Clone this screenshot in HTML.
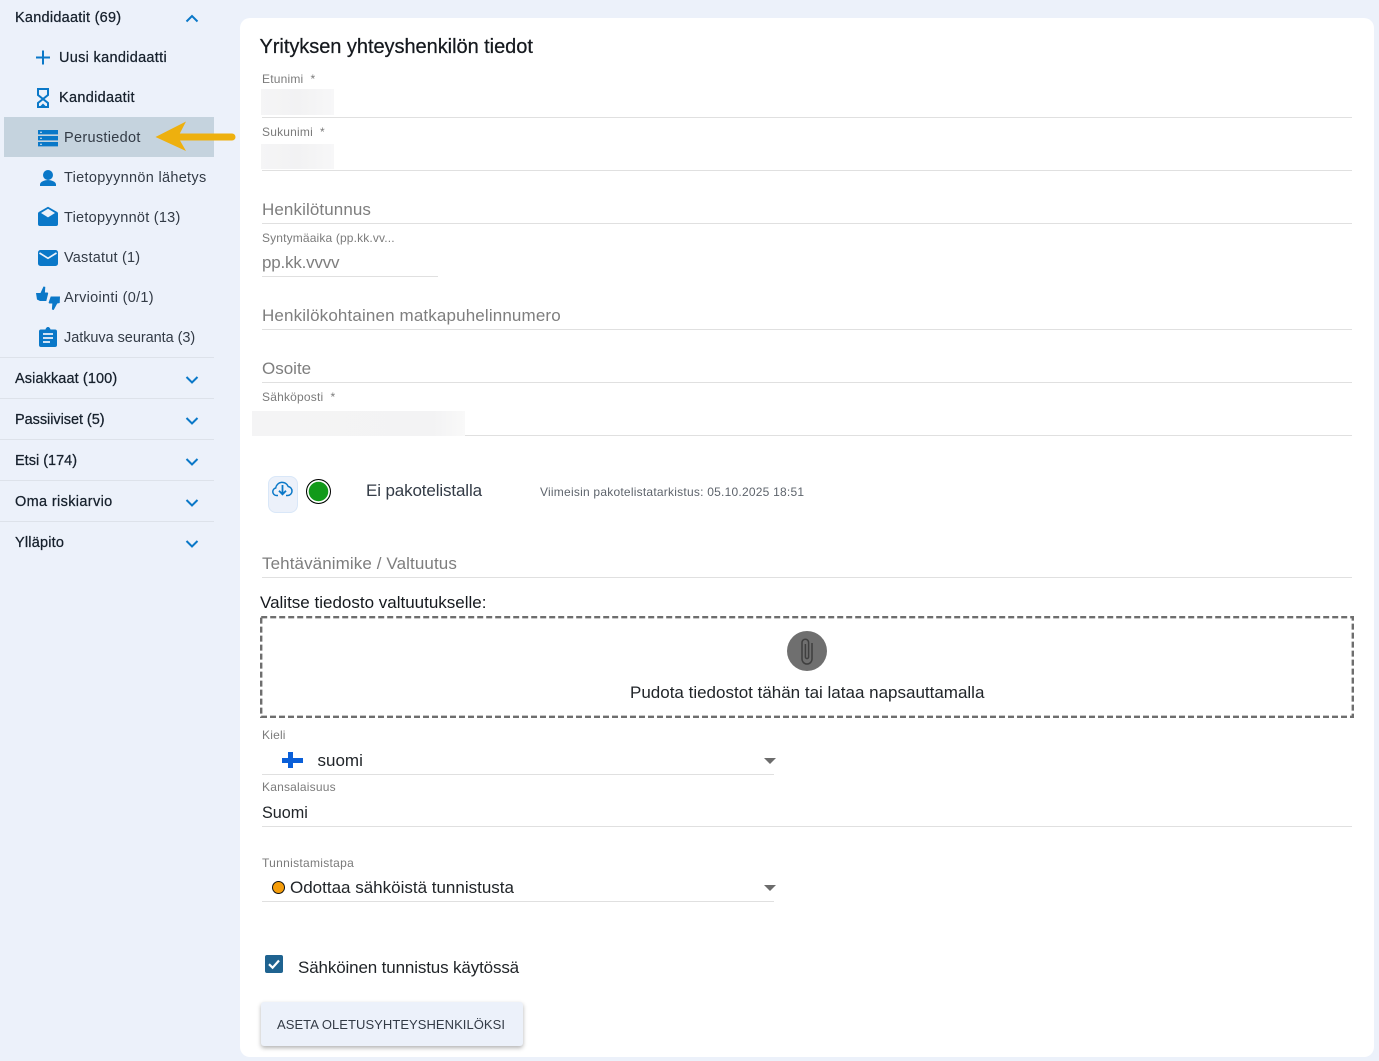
<!DOCTYPE html>
<html lang="fi"><head><meta charset="utf-8"><title>Yrityksen yhteyshenkilön tiedot</title>
<style>
html,body{margin:0;padding:0;width:1379px;height:1061px;overflow:hidden;background:#ecf1fa}
body{position:relative;font-family:"Liberation Sans",sans-serif;color:#212529}
.t{position:absolute;white-space:nowrap;line-height:20px}
.a{position:absolute}
.l{position:absolute;height:1px;background:#e0e0e0}
.sm{font-size:12px;color:#7b7b7b;letter-spacing:.2px}
.ph{font-size:17px;color:#7e7e7e}
.m{font-size:14.5px;color:#16202c;letter-spacing:.3px;-webkit-text-stroke:.25px #16202c}
.s{font-size:14.5px;color:#333b46;letter-spacing:.3px}
.g{font-size:14.5px;color:#16202c;letter-spacing:.1px;-webkit-text-stroke:.25px #16202c}
.b{font-size:17px;color:#212529}
svg{position:absolute;overflow:visible}
</style></head><body>
<div class="a" style="left:240px;top:18px;width:1134px;height:1039px;background:#fff;border-radius:10px"></div>

<div class="a" style="left:4px;top:117px;width:210px;height:40px;background:#c5d3de"></div>
<div class="l" style="left:0;top:357px;width:214px;background:#dde2ea"></div>
<div class="l" style="left:0;top:398px;width:214px;background:#dde2ea"></div>
<div class="l" style="left:0;top:439px;width:214px;background:#dde2ea"></div>
<div class="l" style="left:0;top:480px;width:214px;background:#dde2ea"></div>
<div class="l" style="left:0;top:521px;width:214px;background:#dde2ea"></div>

<div class="t g" style="left:15px;top:8px;letter-spacing:.25px">Kandidaatit (69)</div>
<div class="t m" style="left:59px;top:48px">Uusi kandidaatti</div>
<div class="t m" style="left:59px;top:88px">Kandidaatit</div>
<div class="t s" style="left:64px;top:128px">Perustiedot</div>
<div class="t s" style="left:64px;top:168px">Tietopyynnön lähetys</div>
<div class="t s" style="left:64px;top:208px;letter-spacing:.25px">Tietopyynnöt (13)</div>
<div class="t s" style="left:64px;top:248px;letter-spacing:.2px">Vastatut (1)</div>
<div class="t s" style="left:64px;top:288px">Arviointi (0/1)</div>
<div class="t s" style="left:64px;top:328px;letter-spacing:-.05px">Jatkuva seuranta (3)</div>
<div class="t g" style="left:15px;top:369px;letter-spacing:.1px">Asiakkaat (100)</div>
<div class="t g" style="left:15px;top:410px;letter-spacing:-.05px">Passiiviset (5)</div>
<div class="t g" style="left:15px;top:451px;letter-spacing:0">Etsi (174)</div>
<div class="t g" style="left:15px;top:492px;letter-spacing:.35px">Oma riskiarvio</div>
<div class="t g" style="left:15px;top:533px;letter-spacing:.2px">Ylläpito</div>

<!-- sidebar icons -->
<svg style="left:0;top:0" width="240" height="560" fill="none">
<g stroke="#0a78c8" stroke-width="2" fill="none">
<path d="M186.500 21.500 192 16l5.500 5.500"/>
<path d="M186.500 377 192 382.500l5.500-5.500M186.500 418 192 423.500l5.500-5.500M186.500 459 192 464.500l5.500-5.500M186.500 500 192 505.500l5.500-5.500M186.500 541 192 546.500l5.500-5.500"/>
<path d="M43 50.500v14M36 57.500h14"/>
<path d="M38 89h10v6L38 103v4h10v-4L38 95z"/>
</g>
<path fill="#0a78c8" d="M43 103.500l3.500 3.500h-7z"/>
<path fill="#0a78c8" d="M38 130h20v4.400H38zM38 136h20v4.400H38zM38 142h20v4.400H38z"/>
<path fill="#dfe8f0" d="M40 131.700h2v1.100h-2zM40 137.700h2v1.100h-2zM40 143.700h2v1.100h-2z"/>
<circle cx="48" cy="175" r="5" fill="#0a78c8"/>
<path fill="#0a78c8" d="M40 186v-1.500c0-3 5.300-4.500 8-4.500s8 1.500 8 4.500v1.500z"/>
<path fill="#0a78c8" d="M38 213.500c0-.6.300-1.100.8-1.500l9.200-5.200 9.200 5.200c.5.400.8.900.8 1.500V224a2 2 0 0 1-2 2H40a2 2 0 0 1-2-2z"/>
<path fill="#ecf1fa" d="M41 213l7-4.200 7 4.200-7 4.400z"/>
<rect x="38" y="250" width="20" height="16" rx="2.500" fill="#0a78c8"/>
<path fill="none" stroke="#ecf1fa" stroke-width="1.700" d="M39.500 253l8.500 5.300 8.500-5.300"/>
<path fill="#0a78c8" d="M36 293h4.500l3-6.500 1.800.4-.4 5.600h2.300c.8 0 1.100.6.900 1.200l-1.800 7.300H40l-3-1.500z"/>
<path fill="#0a78c8" d="M60 296.500l-.3 6.500-2.500.5-3.500 6.500-1.800-.5.400-6h-2.600c-.8 0-1.200-.6-1-1.200l2-5.800z"/>
<path fill="#0a78c8" d="M41 329.500h4.500c.3-1.500 1.300-2.500 2.500-2.500s2.200 1 2.500 2.500H55a2 2 0 0 1 2 2V345a2 2 0 0 1-2 2H41a2 2 0 0 1-2-2v-13.500a2 2 0 0 1 2-2z"/>
<path stroke="#ecf1fa" stroke-width="1.700" d="M43 334h10M43 338h10M43 342h7"/>
<path stroke="#eeb00e" stroke-width="7" stroke-linecap="round" d="M180 137h52"/>
<path fill="#eeb00e" d="M155.500 137 186 121.500l-8 15.500 8 14z"/>
</svg>

<!-- main -->
<div class="t" style="left:259.500px;top:37px;font-size:20px;color:#15191e;letter-spacing:-.04px;-webkit-text-stroke:.25px #15191e">Yrityksen yhteyshenkilön tiedot</div>

<div class="t sm" style="left:262px;top:69px">Etunimi&nbsp; *</div>
<div class="a" style="left:261px;top:89px;width:73px;height:26px;background:linear-gradient(90deg,#f5f5f6,#f2f2f3 50%,#f7f7f8)"></div>
<div class="l" style="left:262px;top:117px;width:1090px"></div>
<div class="t sm" style="left:262px;top:122px">Sukunimi&nbsp; *</div>
<div class="a" style="left:261px;top:144px;width:73px;height:25px;background:linear-gradient(90deg,#f5f5f6,#f2f2f3 50%,#f7f7f8)"></div>
<div class="l" style="left:262px;top:170px;width:1090px"></div>

<div class="t ph" style="left:262px;top:200px;letter-spacing:.1px">Henkilötunnus</div>
<div class="l" style="left:262px;top:223px;width:1090px"></div>
<div class="t sm" style="left:262px;top:228px;letter-spacing:.15px">Syntymäaika (pp.kk.vv...</div>
<div class="t ph" style="left:262px;top:253px;letter-spacing:-.2px">pp.kk.vvvv</div>
<div class="l" style="left:262px;top:276px;width:176px"></div>

<div class="t ph" style="left:262px;top:306px;letter-spacing:.14px">Henkilökohtainen matkapuhelinnumero</div>
<div class="l" style="left:262px;top:329px;width:1090px"></div>
<div class="t ph" style="left:262px;top:359px">Osoite</div>
<div class="l" style="left:262px;top:382px;width:1090px"></div>
<div class="t sm" style="left:262px;top:387px">Sähköposti&nbsp; *</div>
<div class="a" style="left:252px;top:411px;width:213px;height:25px;background:linear-gradient(90deg,#f4f4f5,#f3f3f4 85%,#f9f9f9)"></div>
<div class="l" style="left:465px;top:435px;width:887px"></div>

<div class="a" style="left:268px;top:476px;width:28px;height:35px;background:#ecf1fa;border:1px solid #d9e7f8;border-radius:8px"></div>
<svg style="left:268px;top:476px" width="30" height="30" fill="none">
<path stroke="#0a78c8" stroke-width="1.500" d="M10 19.500H8.500a3.800 3.800 0 0 1-.8-7.500 6.500 6.500 0 0 1 12.500-1.500 4.500 4.500 0 0 1 3.800 4.600 4.400 4.400 0 0 1-4.500 4.400H18"/>
<path stroke="#0a78c8" stroke-width="1.800" d="M14.500 9v9M11 14.800l3.500 3.500 3.500-3.500"/>
</svg>
<div class="a" style="left:306px;top:479px;width:23px;height:23px;border:1.500px solid #000;border-radius:50%;background:#119a19;box-shadow:inset 0 0 0 1.700px #fff"></div>
<div class="t b" style="left:366px;top:480.500px;color:#333b46;letter-spacing:-.13px">Ei pakotelistalla</div>
<div class="t" style="left:540px;top:482px;font-size:12px;color:#5e646c;letter-spacing:.23px">Viimeisin pakotelistatarkistus: 05.10.2025 18:51</div>

<div class="t ph" style="left:262px;top:554px;letter-spacing:.1px">Tehtävänimike / Valtuutus</div>
<div class="l" style="left:262px;top:577px;width:1090px"></div>
<div class="t b" style="left:260px;top:593px;color:#15191e">Valitse tiedosto valtuutukselle:</div>

<svg style="left:260px;top:616px" width="1094" height="102" fill="none"><rect x="1.200" y="1.200" width="1091.600" height="99.600" stroke="#6e6e6e" stroke-width="2.400" stroke-dasharray="6 3"/></svg>
<div class="a" style="left:787px;top:631px;width:40px;height:40px;border-radius:50%;background:#6f6f6f"></div>
<svg style="left:787px;top:631px" width="40" height="40" fill="none">
<path stroke="#3f3f3f" stroke-width="1.500" d="M25 12v16a5 5 0 0 1-10 0V11.500a3.300 3.300 0 0 1 6.600 0V26a1.600 1.600 0 0 1-3.200 0V13"/>
</svg>
<div class="t b" style="left:630px;top:683px;width:354px;text-align:center">Pudota tiedostot tähän tai lataa napsauttamalla</div>

<div class="t sm" style="left:262px;top:725px">Kieli</div>
<div class="a" style="left:282px;top:758px;width:21px;height:5px;background:#0a5fd8"></div>
<div class="a" style="left:287.500px;top:752px;width:5.500px;height:16px;background:#0a5fd8"></div>
<div class="t b" style="left:317.500px;top:751px">suomi</div>
<svg style="left:764px;top:757.500px" width="12" height="7"><path fill="#6c6c6c" d="M0 0h12L6 6z"/></svg>
<div class="l" style="left:262px;top:774px;width:512px"></div>

<div class="t sm" style="left:262px;top:777px">Kansalaisuus</div>
<div class="t" style="left:262px;top:803px;font-size:16.200px;color:#212529">Suomi</div>
<div class="l" style="left:262px;top:826px;width:1090px"></div>

<div class="t sm" style="left:262px;top:853px;letter-spacing:.3px">Tunnistamistapa</div>
<div class="a" style="left:272px;top:881px;width:11px;height:11px;border:1.500px solid #111;border-radius:50%;background:#f59d0a"></div>
<div class="t b" style="left:290px;top:878px">Odottaa sähköistä tunnistusta</div>
<svg style="left:764px;top:884.500px" width="12" height="7"><path fill="#6c6c6c" d="M0 0h12L6 6z"/></svg>
<div class="l" style="left:262px;top:901px;width:512px"></div>

<div class="a" style="left:265px;top:955px;width:18px;height:18px;border-radius:2px;background:#1f6390"></div>
<svg style="left:265px;top:955px" width="18" height="18" fill="none"><path stroke="#fff" stroke-width="2.200" d="M4 9.200l3.600 3.500L14 5.500"/></svg>
<div class="t b" style="left:298px;top:958px;letter-spacing:-.14px">Sähköinen tunnistus käytössä</div>

<div class="a" style="left:261px;top:1002px;width:262px;height:44px;background:#ecf1fa;border-radius:3px;box-shadow:0 2px 4px rgba(0,0,0,.3)"></div>
<div class="t" style="left:277px;top:1015px;font-size:13px;color:#333b46;letter-spacing:.05px">ASETA OLETUSYHTEYSHENKILÖKSI</div>
</body></html>
